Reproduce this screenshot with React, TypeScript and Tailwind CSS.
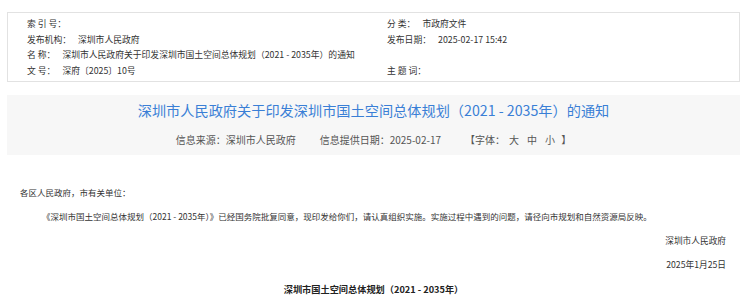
import React from "react";

const infoLeft = [
	{ label: "索 引 号：", value: "" },
	{ label: "发布机构：", value: "深圳市人民政府" },
	{ label: "名 称：", value: "深圳市人民政府关于印发深圳市国土空间总体规划（2021 - 2035年）的通知" },
	{ label: "文 号：", value: "深府〔2025〕10号" },
];

const infoRight = [
	{ label: "分 类：", value: "市政府文件" },
	{ label: "发布日期：", value: "2025-02-17 15:42" },
	{ label: "", value: "" },
	{ label: "主 题 词：", value: "" },
];

function InfoRow({ label, value }: { label: string; value: string }) {
	return (
		<div className="h-[15.7px] leading-[15.7px] whitespace-pre">
			<span>{label}</span>
			{value && <span className="ml-[7px]">{value}</span>}
		</div>
	);
}

export default function App() {
	return (
		<div className="w-[740px] h-[298px] overflow-hidden bg-white pt-[12px] pl-[7px] font-['Noto_Sans_CJK_SC','Microsoft_YaHei',sans-serif] text-[#333]">
			<div className="border border-[#e2e2e2] py-[3px] pl-[19px] grid grid-cols-[360px_1fr] text-[8.8px] h-[70px]">
				<div>
					{infoLeft.map((r, i) => (
						<InfoRow key={i} {...r} />
					))}
				</div>
				<div>
					{infoRight.map((r, i) => (
						<InfoRow key={i} {...r} />
					))}
				</div>
			</div>

			<div className="mt-[13px] h-[60px] bg-[#f7f7f7] pt-[4px] flex flex-col items-center">
				<h1 className="text-[14.2px] leading-[22px] text-[#3a7fd6] whitespace-nowrap">
					深圳市人民政府关于印发深圳市国土空间总体规划（2021 - 2035年）的通知
				</h1>
				<div className="mt-[12px] flex gap-[24px] text-[10px] leading-[14px] text-[#555] whitespace-nowrap">
					<span>信息来源：深圳市人民政府</span>
					<span>信息提供日期：2025-02-17</span>
					<span>
						【字体：
						<span className="mx-[4px]">大</span>
						<span className="mx-[4px]">中</span>
						<span className="mx-[4px]">小</span> 】
					</span>
				</div>
			</div>

			<div className="mt-[25px] text-[8.5px] leading-[24.3px] pr-[14px]">
				<p className="pl-[13px]">各区人民政府，市有关单位：</p>
				<p className="pl-[35px] whitespace-nowrap">
					《深圳市国土空间总体规划（2021 - 2035年）》已经国务院批复同意，现印发给你们，请认真组织实施。实施过程中遇到的问题，请径向市规划和自然资源局反映。
				</p>
				<p className="text-right text-[8.7px]">深圳市人民政府</p>
				<p className="text-right text-[8.7px]">2025年1月25日</p>
				<p className="text-center font-bold text-[9.2px] text-[#222] pl-[14px]">
					深圳市国土空间总体规划（2021 - 2035年）
				</p>
			</div>
		</div>
	);
}
